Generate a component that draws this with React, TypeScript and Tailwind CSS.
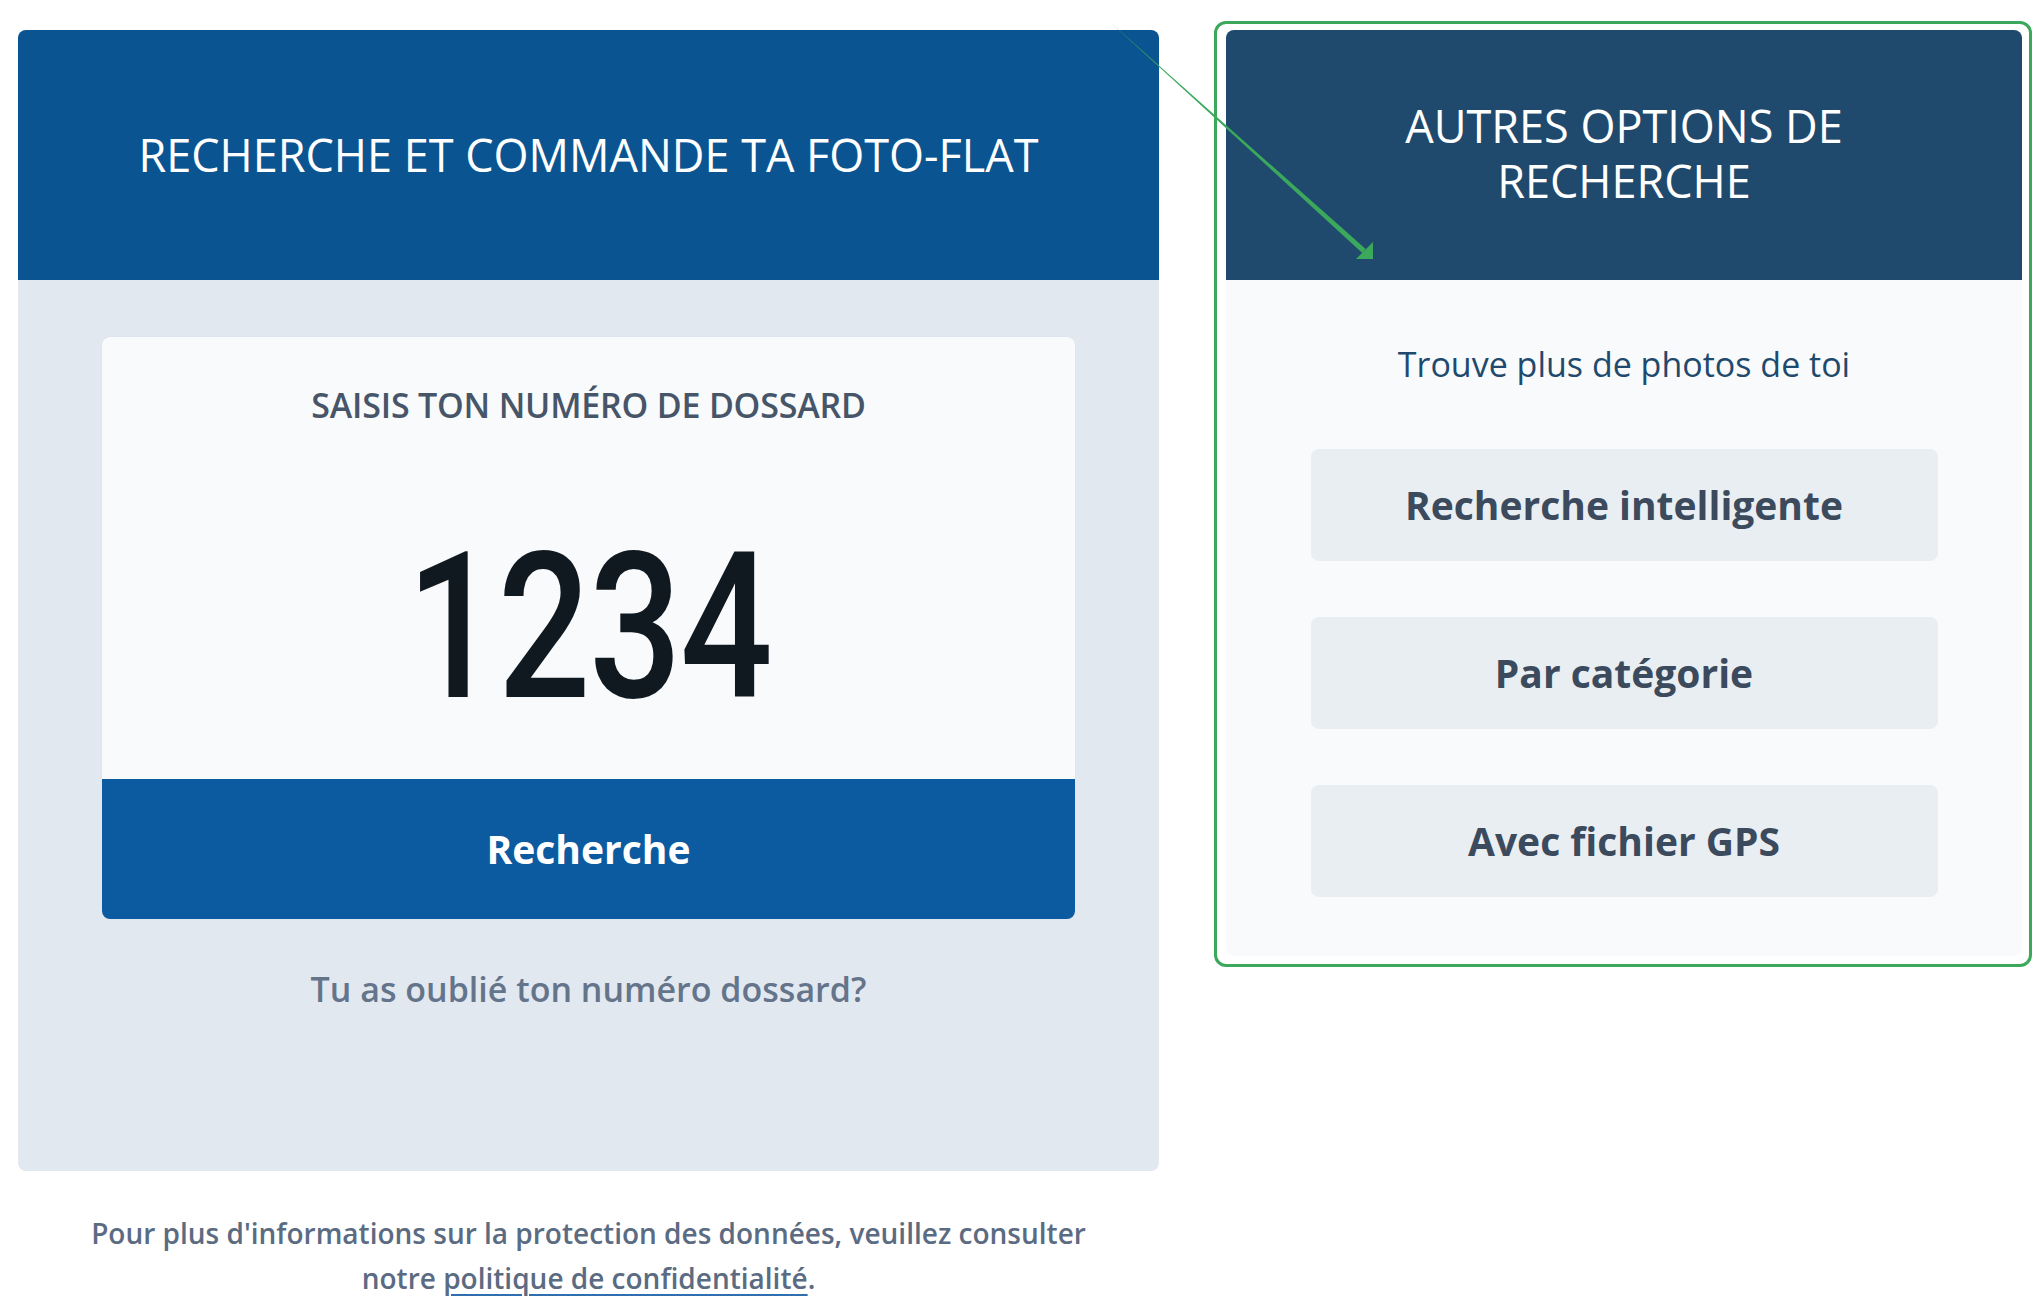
import React from 'react'

const font = "font-['Open_Sans',sans-serif]"

const options = ['Recherche intelligente', 'Par catégorie', 'Avec fichier GPS']

function Arrow() {
  // green annotation arrow drawn over the two cards
  return (
    <svg className="absolute left-0 top-0 pointer-events-none" width={2040} height={1306} viewBox="0 0 2040 1306">
      <polygon points="1110,22 1362.3,252.9 1365.7,249.1" fill="#3ba85c" />
      <polygon points="1356,259 1373,259 1373,242" fill="#3ba85c" />
    </svg>
  )
}

export default function App() {
  return (
    <div className={`relative w-[2040px] h-[1306px] bg-white ${font}`}>
      <div className="flex items-start pl-[18px] pt-[21px]">
        {/* Main search card */}
        <div className="w-[1141px] mt-[9px] flex flex-col">
          <div className="rounded-lg overflow-hidden bg-[#e2e8f0]">
            <div className="h-[250px] bg-[#0a5591] flex items-center justify-center">
              <h1 className="text-white text-[45px] leading-[55px] mb-[2px]">
                RECHERCHE ET COMMANDE TA FOTO-FLAT
              </h1>
            </div>
            <div className="px-[84px] pt-[57px] h-[891px] flex flex-col">
              <div className="rounded-lg overflow-hidden bg-[#f8fafc] shadow-[0_0_1px_rgba(0,0,0,0.08)]">
                <div className="h-[442px] flex flex-col items-center">
                  <p className="mt-[48px] text-[34px] leading-[40px] font-semibold text-[#475569] tracking-[-0.2px]">
                    SAISIS TON NUMÉRO DE DOSSARD
                  </p>
                  <div className="mt-[103px] font-['Roboto',sans-serif] font-medium text-[204px] leading-[200px] text-[#101820] scale-x-[0.8] tracking-[-2px]">
                    1234
                  </div>
                </div>
                <button className="w-full h-[140px] bg-[#0c5aa0] text-white text-[39px] font-bold flex items-center justify-center">
                  Recherche
                </button>
              </div>
              <p className="mt-[48px] text-center text-[34px] leading-[44px] font-semibold text-[#64748b]">
                Tu as oublié ton numéro dossard?
              </p>
            </div>
          </div>
          <p className="mt-[40px] text-center text-[28px] leading-[45px] font-semibold text-[#5b6b82]">
            Pour plus d'informations sur la protection des données, veuillez consulter
            <br />
            notre{' '}
            <a className="underline decoration-[#2f6fb0] decoration-2 underline-offset-[5px]">politique de confidentialité</a>.
          </p>
        </div>

        {/* Other search options, highlighted */}
        <div className="ml-[55px] border-[3px] border-[#3ba85c] rounded-xl pl-[9px] pt-[6px] pr-[7px] pb-[8px]">
          <div className="w-[796px] rounded-lg overflow-hidden bg-[#f8fafc]">
            <div className="h-[250px] bg-[#1f4a6e] flex items-center justify-center">
              <h2 className="text-white text-[45px] leading-[55px] text-center mb-[4px]">
                AUTRES OPTIONS DE
                <br />
                RECHERCHE
              </h2>
            </div>
            <div className="flex flex-col items-center pt-[62px] pb-[59px]">
              <p className="text-[34px] leading-[44px] text-[#1f4a6e]">Trouve plus de photos de toi</p>
              <div className="mt-[63px] flex flex-col gap-[56px]">
                {options.map(o => (
                  <button
                    key={o}
                    className="w-[627px] h-[112px] rounded-lg bg-[#e9eef3] text-[39px] font-bold text-[#3b4a5c] flex items-center justify-center"
                  >
                    {o}
                  </button>
                ))}
              </div>
            </div>
          </div>
        </div>
      </div>
      <Arrow />
    </div>
  )
}
